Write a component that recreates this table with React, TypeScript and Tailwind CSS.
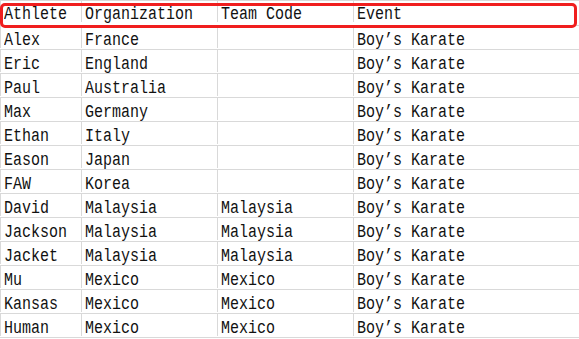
const rows: [string, string, string, string][] = [
  ["Alex", "France", "", "Boy’s Karate"],
  ["Eric", "England", "", "Boy’s Karate"],
  ["Paul", "Australia", "", "Boy’s Karate"],
  ["Max", "Germany", "", "Boy’s Karate"],
  ["Ethan", "Italy", "", "Boy’s Karate"],
  ["Eason", "Japan", "", "Boy’s Karate"],
  ["FAW", "Korea", "", "Boy’s Karate"],
  ["David", "Malaysia", "Malaysia", "Boy’s Karate"],
  ["Jackson", "Malaysia", "Malaysia", "Boy’s Karate"],
  ["Jacket", "Malaysia", "Malaysia", "Boy’s Karate"],
  ["Mu", "Mexico", "Mexico", "Boy’s Karate"],
  ["Kansas", "Mexico", "Mexico", "Boy’s Karate"],
  ["Human", "Mexico", "Mexico", "Boy’s Karate"],
];

// tall, narrow glyphs like the spreadsheet's SimSun
function T({ children }: { children: string }) {
  return <span className="inline-block scale-y-[1.18] whitespace-pre">{children}</span>;
}

function Row({ cells, header }: { cells: string[]; header?: boolean }) {
  return (
    <div
      className={`flex border-b border-[#d9d9d9] ${header ? "h-[25px] pb-[3px]" : "h-[24px] pb-[1px]"}`}
    >
      <div className="w-[82px] shrink-0 border-x border-[#d9d9d9] pl-[3px] flex items-end">
        <T>{cells[0]}</T>
      </div>
      <div className="w-[136px] shrink-0 border-r border-[#d9d9d9] pl-[3px] flex items-end">
        <T>{cells[1]}</T>
      </div>
      <div className="w-[136px] shrink-0 border-r border-[#d9d9d9] pl-[3px] flex items-end">
        <T>{cells[2]}</T>
      </div>
      <div className="flex-1 pl-[3px] flex items-end">
        <T>{cells[3]}</T>
      </div>
    </div>
  );
}

export default function App() {
  return (
    <div className="w-[579px] h-[339px] overflow-hidden bg-white">
      <div
        className="relative border-t border-[#d9d9d9] text-[15px] leading-none text-[#111]"
        style={{ fontFamily: '"Liberation Mono", monospace' }}
      >
        <Row header cells={["Athlete", "Organization", "Team Code", "Event"]} />
        {rows.map((r) => (
          <Row key={r[0]} cells={r} />
        ))}
        <div className="absolute left-0 top-[2px] w-[577px] h-[25px] border-[3px] border-[#f01e1e] rounded-[5px]" />
      </div>
    </div>
  );
}
